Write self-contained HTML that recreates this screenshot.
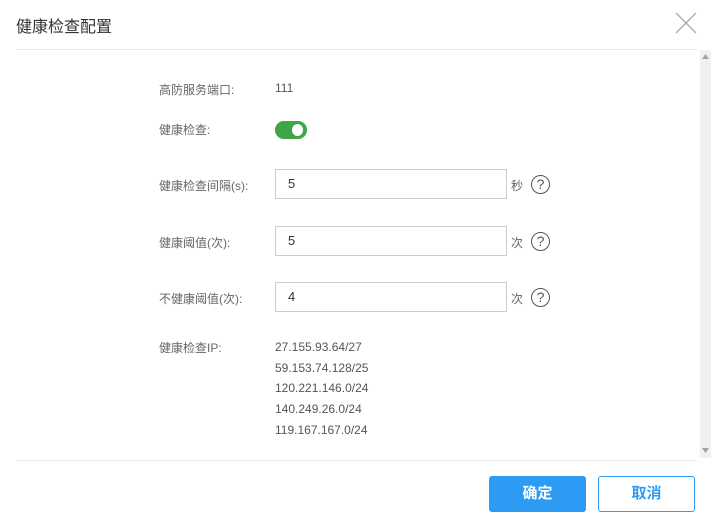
<!DOCTYPE html>
<html><head><meta charset="utf-8"><style>
*{margin:0;padding:0;box-sizing:border-box}
body{width:711px;height:524px;background:#fff;font-family:"Liberation Sans","Noto Sans CJK SC",sans-serif;position:relative;overflow:hidden;color:#666;font-size:12px}
.a{position:absolute;white-space:nowrap}
.title{left:16px;top:13px;font-size:16px;color:#333}
.hr{position:absolute;left:16px;width:681px;height:1px;background:#e8e8e8}
.lbl{left:159px}
.inp{position:absolute;left:275px;width:232px;height:30px;border:1px solid #ccc;padding-left:12px;line-height:28px;color:#333;font-size:13px}
.q{position:absolute;width:19px;height:19px;border:1.5px solid #555;border-radius:50%;text-align:center;line-height:16px;font-size:14px;color:#555}
.btn{position:absolute;top:476px;width:97px;height:36px;border-radius:3px;text-align:center;line-height:36px;font-size:15px;font-weight:bold}
</style></head><body>
<div class="a title">健康检查配置</div>
<svg class="a" style="left:675px;top:12px" width="22" height="22"><path d="M1 1L21 21M21 1L1 21" stroke="#aaa" stroke-width="1.3"/></svg>
<div class="hr" style="top:49px"></div>
<div class="a" style="left:700px;top:50px;width:11px;height:408px;background:#f1f1f1"></div>
<svg class="a" style="left:702px;top:54px" width="7" height="6"><path d="M0 5L3.5 0L7 5Z" fill="#a3a3a3"/></svg>
<svg class="a" style="left:702px;top:448px" width="7" height="6"><path d="M0 0L3.5 5L7 0Z" fill="#a3a3a3"/></svg>
<div class="a lbl" style="top:81px">高防服务端口:</div>
<div class="a" style="left:275px;top:81px;color:#555">111</div>
<div class="a lbl" style="top:121px">健康检查:</div>
<div class="a" style="left:275px;top:121px;width:32px;height:18px;border-radius:9px;background:#3ea649"></div>
<div class="a" style="left:292px;top:124px;width:11px;height:12px;border-radius:50%;background:#fff"></div>
<div class="a lbl" style="top:177px">健康检查间隔(s):</div>
<div class="inp" style="top:169px">5</div>
<div class="a" style="left:511px;top:177px">秒</div>
<div class="q" style="left:531px;top:175px">?</div>
<div class="a lbl" style="top:234px">健康阈值(次):</div>
<div class="inp" style="top:226px">5</div>
<div class="a" style="left:511px;top:234px">次</div>
<div class="q" style="left:531px;top:232px">?</div>
<div class="a lbl" style="top:290px">不健康阈值(次):</div>
<div class="inp" style="top:282px">4</div>
<div class="a" style="left:511px;top:290px">次</div>
<div class="q" style="left:531px;top:288px">?</div>
<div class="a lbl" style="top:339px">健康检查IP:</div>
<div class="a" style="left:275px;top:337px;line-height:20.7px;color:#555">27.155.93.64/27<br>59.153.74.128/25<br>120.221.146.0/24<br>140.249.26.0/24<br>119.167.167.0/24</div>
<div class="hr" style="top:460px"></div>
<div class="btn" style="left:489px;background:#2d9bf3;color:#fff">确定</div>
<div class="btn" style="left:598px;border:1px solid #2d9bf3;color:#2d9bf3;line-height:34px">取消</div>
</body></html>
